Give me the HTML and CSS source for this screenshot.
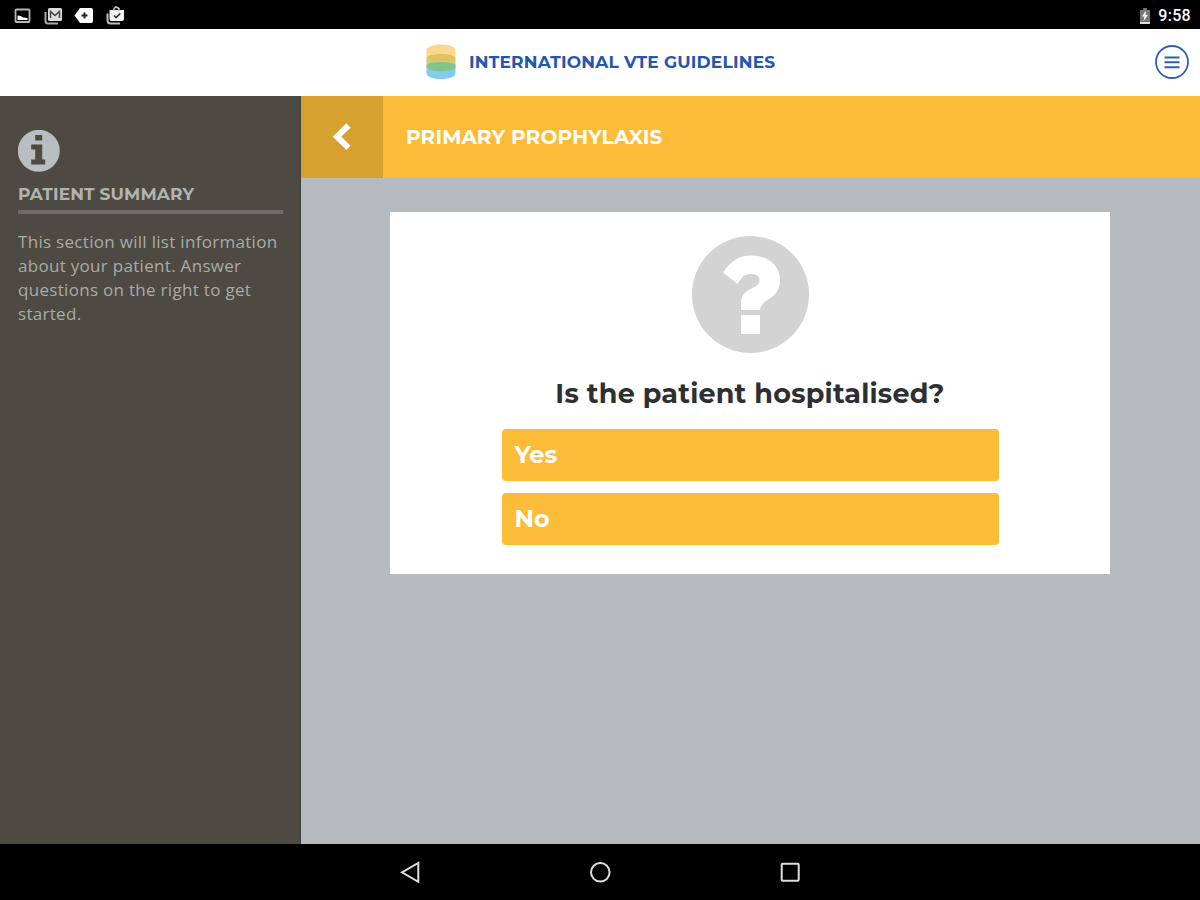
FILE: index.html
```html
<!DOCTYPE html>
<html lang="en">

<head>
    <meta charset="UTF-8">
    <meta name="viewport" content="width=device-width, initial-scale=1.0">
    <title>International VTE Guidelines</title>
    <link rel="stylesheet" href="styles.css">
</head>

<body>
    <div class="status-bar">
        <div class="status-icons">
            <!-- picture -->
            <svg width="18" height="20" viewBox="0 0 18 20">
                <rect x="1.500" y="3.500" width="14" height="12.500" rx="1" fill="none" stroke="#b4b4b4" stroke-width="1.800"/>
                <path d="M3.500 14V9.500l3 .5 3 1.500 4 .5v2z" fill="#fff"/>
            </svg>
            <!-- mail stack -->
            <svg width="20" height="20" viewBox="0 0 20 20">
                <path d="M2.500 6v9q0 2.500 2.500 2.500H15" fill="none" stroke="#aaa" stroke-width="2"/>
                <rect x="5" y="2" width="14" height="13" rx="1.500" fill="#ddd"/>
                <path d="M7.500 12V5.500l4.500 4 4.500-4V12" fill="none" stroke="#444" stroke-width="1.500"/>
            </svg>
            <!-- tag -->
            <svg width="20" height="20" viewBox="0 0 20 20">
                <path d="M6 2h11q2 0 2 2v11q0 2-2 2H6L.5 9.500z" fill="#fff"/>
                <path d="M7.500 9.500h6M10.500 6.500v6" stroke="#222" stroke-width="2"/>
            </svg>
            <!-- bag with check -->
            <svg width="20" height="20" viewBox="0 0 20 20">
                <path d="M2.500 7.500v7q0 3 3 3H15" fill="none" stroke="#bbb" stroke-width="2"/>
                <path d="M4.500 4h14.500V13q0 2-2 2H6.500q-2 0-2-2z" fill="#f2f2f2"/>
                <path d="M9 5V2.500l2-1.500 3 1.500V5" fill="none" stroke="#ccc" stroke-width="1.500"/>
                <path d="M9 9.500l2.200 2 4-4" fill="none" stroke="#222" stroke-width="1.600"/>
            </svg>
        </div>
        <div class="status-right">
            <svg width="12" height="18" viewBox="0 0 12 18">
                <path d="M1 3h3V1h4v2h3v14H1z" fill="#777"/>
                <path d="M1 15h10v2H1z" fill="#ddd"/>
                <path d="M7 3.500L3 9.500h2.500L4.500 14 9 8H6.500z" fill="#fff"/>
            </svg>
            <span class="clock">9:58</span>
        </div>
    </div>

    <header class="header">
        <div class="brand">
            <svg class="logo" width="30" height="36" viewBox="0 0 30 36">
                <path d="M.5 23v6c0 8 29 8 29 0v-6c0-7-29-7-29 0z" fill="#82cdec"/>
                <path d="M.5 15v6c0 7 29 7 29 0v-6c0-7-29-7-29 0z" fill="#c5cf76"/>
                <path d="M.5 23c0 5.500 29 5.500 29 0v-2c-3-4-26-4-29 0z" fill="#83c48b"/>
                <path d="M.5 6v7c0 6 29 6 29 0V6C29.500-1.500.5-1.500.5 6z" fill="#fcd791"/>
                <path d="M.5 14c0 5 29 5 29 0-2-5.500-27-5.500-29 0z" fill="#dfc363"/>
            </svg>
            <span class="brand-name">INTERNATIONAL VTE GUIDELINES</span>
        </div>
        <svg class="menu" width="36" height="36" viewBox="0 0 36 36" fill="none" stroke="#2d5fb4">
            <circle cx="18" cy="18" r="16" stroke-width="1.800"/>
            <path d="M10.500 13.500h15M10.500 18.300h15M10.500 23.200h15" stroke-width="2"/>
        </svg>
    </header>

    <div class="main">
        <aside class="sidebar">
            <svg class="info-icon" width="42" height="42" viewBox="0 0 42 42">
                <circle cx="20.800" cy="20.800" r="21" fill="#bbbec0"/>
                <path d="M17.200 5h7v5.500h-7zM13.200 14.500h11v15h3V34.500h-14v-5h4V19.500h-4z" fill="#4d4a43"/>
            </svg>
            <h2>PATIENT SUMMARY</h2>
            <p>This section will list information about your patient. Answer questions on the right to get started.</p>
        </aside>

        <div class="content">
            <div class="title-bar">
                <div class="back">
                    <svg width="20" height="30" viewBox="0 0 20 30">
                        <path d="M16.500 3.500L5 14.700l11.500 11.200" fill="none" stroke="#fff" stroke-width="6"/>
                    </svg>
                </div>
                <h1>PRIMARY PROPHYLAXIS</h1>
            </div>

            <div class="card">
                <svg class="question-icon" width="118" height="118" viewBox="0 0 118 118">
                    <circle cx="59.500" cy="58.500" r="58.500" fill="#d3d3d3"/>
                    <path d="M32 36.500C40 25 48 19.500 60 19.500C77 19.500 89 29 89 44C89 64 70 62 69 74H50V66C50 52 68.500 53 68.500 44.500C68.500 40 65 38 60 38C53 38 50.500 42 46.500 48z" fill="#fff"/>
                    <path d="M50 79h19v19h-19z" fill="#fff"/>
                </svg>
                <h3>Is the patient hospitalised?</h3>
                <div class="answers">
                    <div class="answer">Yes</div>
                    <div class="answer">No</div>
                </div>
            </div>
        </div>
    </div>

    <div class="nav-bar">
        <svg width="24" height="24" viewBox="0 0 24 24">
            <path d="M4 12.300L20.300 3v18.800z"/>
        </svg>
        <svg width="24" height="24" viewBox="0 0 24 24">
            <circle cx="12.300" cy="12.300" r="9.300"/>
        </svg>
        <svg width="24" height="24" viewBox="0 0 24 24">
            <rect x="3.700" y="3.800" width="17" height="17" rx="1"/>
        </svg>
    </div>
</body>

</html>
```
FILE: styles.css
```css
* {
    box-sizing: border-box;
}

body {
    display: flex;
    flex-direction: column;
    height: 100vh;
    margin: 0;
    background-color: #000;
    font-family: Montserrat, Inter, sans-serif;
    overflow: hidden;
}

svg {
    display: block;
    flex-shrink: 0;
}

h1,
h2,
h3,
p {
    margin: 0;
}

.status-bar {
    display: flex;
    justify-content: space-between;
    align-items: center;
    height: 29px;
    padding: 2px 9px 0 14px;
    background-color: #000;
    color: #fff;
}

.status-icons {
    display: flex;
    gap: 11px;
}

.status-right {
    display: flex;
    align-items: center;
    gap: 7px;
}

.clock {
    font-family: Roboto, sans-serif;
    font-size: 16px;
    font-weight: 500;
    letter-spacing: 0.3px;
}

.header {
    display: flex;
    align-items: center;
    height: 67px;
    padding: 0 10px 1px 426px;
    background-color: #fff;
}

.brand {
    display: flex;
    flex: 1;
    align-items: center;
    gap: 13px;
}

.brand-name {
    color: #2456ae;
    font-size: 17px;
    font-weight: 700;
    letter-spacing: 0.2px;
    white-space: nowrap;
}

.main {
    display: flex;
    height: 748px;
}

.sidebar {
    width: 301px;
    padding: 34px 17px 0 18px;
    background-color: #4d4a43;
    border-right: 1px solid #42403c;
    color: #b2b3b1;
}

.sidebar h2 {
    margin-top: 11px;
    padding-bottom: 5px;
    border-bottom: 4px solid #6d6c68;
    font-size: 17px;
    font-weight: 700;
    line-height: 22px;
    letter-spacing: 0.12px;
    white-space: nowrap;
}

.sidebar p {
    margin-top: 16px;
    color: #a9aaa7;
    font-family: "Open Sans", sans-serif;
    font-size: 17px;
    line-height: 24px;
    letter-spacing: 0.3px;
}

.content {
    flex: 1;
    background-color: #b4babd;
}

.title-bar {
    display: flex;
    align-items: center;
    height: 82px;
    background-color: #fdbc38;
}

.back {
    display: flex;
    justify-content: center;
    align-items: center;
    width: 82px;
    height: 82px;
    background-color: #d6a12e;
}

.title-bar h1 {
    margin-left: 23px;
    color: #fff;
    font-size: 20px;
    font-weight: 700;
    letter-spacing: 0.15px;
}

.card {
    display: flex;
    flex-direction: column;
    align-items: center;
    width: 720px;
    height: 362px;
    margin: 34px 0 0 89px;
    padding-top: 24px;
    background-color: #fff;
}

.card h3 {
    margin-top: 22px;
    color: #2e2e33;
    font-size: 27px;
    font-weight: 700;
    line-height: 36px;
    letter-spacing: 0.2px;
    white-space: nowrap;
}

.answers {
    display: flex;
    flex-direction: column;
    gap: 12px;
    width: 497px;
    margin-top: 17px;
}

.answer {
    height: 52px;
    padding-left: 13px;
    border-radius: 4px;
    background-color: #fdbc38;
    color: #fff;
    font-size: 24px;
    font-weight: 700;
    line-height: 52px;
}

.nav-bar {
    display: flex;
    justify-content: center;
    gap: 166px;
    flex: 1;
    padding-top: 16px;
    background-color: #000;
}

.nav-bar svg {
    fill: none;
    stroke: #dedede;
    stroke-width: 2;
}
```
